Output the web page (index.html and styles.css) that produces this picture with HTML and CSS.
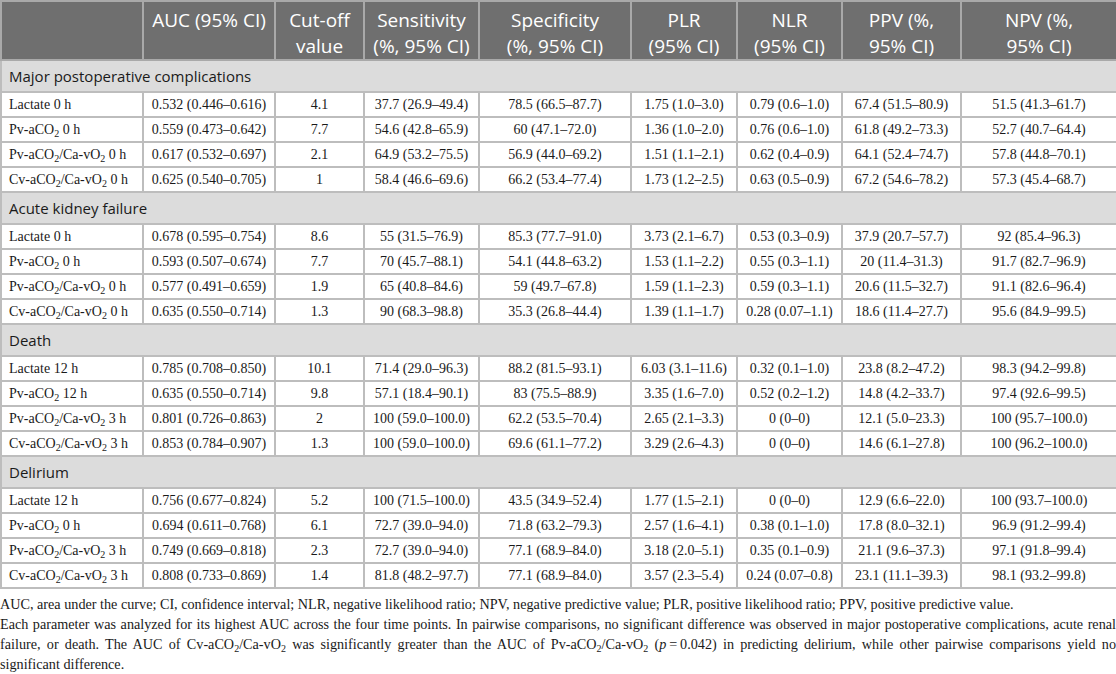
FILE: index.html
```html
<!DOCTYPE html>
<html lang="en">

<head>
    <meta charset="UTF-8">
    <meta name="viewport" content="width=device-width, initial-scale=1.0">
    <title>ROC table</title>
    <link rel="stylesheet" href="styles.css">
</head>

<body>

    <table class="roc">
        <colgroup>
            <col style="width:142px">
            <col style="width:132px">
            <col style="width:89px">
            <col style="width:115px">
            <col style="width:152px">
            <col style="width:106px">
            <col style="width:105px">
            <col style="width:119px">
            <col style="width:156px">
        </colgroup>
        <thead>
            <tr>
                <th></th>
                <th>AUC (95% CI)</th>
                <th>Cut-off<br>value</th>
                <th>Sensitivity<br>(%, 95% CI)</th>
                <th>Specificity<br>(%, 95% CI)</th>
                <th>PLR<br>(95% CI)</th>
                <th>NLR<br>(95% CI)</th>
                <th>PPV (%,<br>95% CI)</th>
                <th>NPV (%,<br>95% CI)</th>
            </tr>
        </thead>
        <tbody>
            <tr class="group"><td colspan="9">Major postoperative complications</td></tr>
            <tr>
                <td>Lactate 0 h</td><td>0.532 (0.446–0.616)</td><td>4.1</td><td>37.7 (26.9–49.4)</td><td>78.5 (66.5–87.7)</td>
                <td>1.75 (1.0–3.0)</td><td>0.79 (0.6–1.0)</td><td>67.4 (51.5–80.9)</td><td>51.5 (41.3–61.7)</td>
            </tr>
            <tr>
                <td>Pv-aCO<sub>2</sub> 0 h</td><td>0.559 (0.473–0.642)</td><td>7.7</td><td>54.6 (42.8–65.9)</td><td>60 (47.1–72.0)</td>
                <td>1.36 (1.0–2.0)</td><td>0.76 (0.6–1.0)</td><td>61.8 (49.2–73.3)</td><td>52.7 (40.7–64.4)</td>
            </tr>
            <tr>
                <td>Pv-aCO<sub>2</sub>/Ca-vO<sub>2</sub> 0 h</td><td>0.617 (0.532–0.697)</td><td>2.1</td><td>64.9 (53.2–75.5)</td><td>56.9 (44.0–69.2)</td>
                <td>1.51 (1.1–2.1)</td><td>0.62 (0.4–0.9)</td><td>64.1 (52.4–74.7)</td><td>57.8 (44.8–70.1)</td>
            </tr>
            <tr>
                <td>Cv-aCO<sub>2</sub>/Ca-vO<sub>2</sub> 0 h</td><td>0.625 (0.540–0.705)</td><td>1</td><td>58.4 (46.6–69.6)</td><td>66.2 (53.4–77.4)</td>
                <td>1.73 (1.2–2.5)</td><td>0.63 (0.5–0.9)</td><td>67.2 (54.6–78.2)</td><td>57.3 (45.4–68.7)</td>
            </tr>

            <tr class="group"><td colspan="9">Acute kidney failure</td></tr>
            <tr>
                <td>Lactate 0 h</td><td>0.678 (0.595–0.754)</td><td>8.6</td><td>55 (31.5–76.9)</td><td>85.3 (77.7–91.0)</td>
                <td>3.73 (2.1–6.7)</td><td>0.53 (0.3–0.9)</td><td>37.9 (20.7–57.7)</td><td>92 (85.4–96.3)</td>
            </tr>
            <tr>
                <td>Pv-aCO<sub>2</sub> 0 h</td><td>0.593 (0.507–0.674)</td><td>7.7</td><td>70 (45.7–88.1)</td><td>54.1 (44.8–63.2)</td>
                <td>1.53 (1.1–2.2)</td><td>0.55 (0.3–1.1)</td><td>20 (11.4–31.3)</td><td>91.7 (82.7–96.9)</td>
            </tr>
            <tr>
                <td>Pv-aCO<sub>2</sub>/Ca-vO<sub>2</sub> 0 h</td><td>0.577 (0.491–0.659)</td><td>1.9</td><td>65 (40.8–84.6)</td><td>59 (49.7–67.8)</td>
                <td>1.59 (1.1–2.3)</td><td>0.59 (0.3–1.1)</td><td>20.6 (11.5–32.7)</td><td>91.1 (82.6–96.4)</td>
            </tr>
            <tr>
                <td>Cv-aCO<sub>2</sub>/Ca-vO<sub>2</sub> 0 h</td><td>0.635 (0.550–0.714)</td><td>1.3</td><td>90 (68.3–98.8)</td><td>35.3 (26.8–44.4)</td>
                <td>1.39 (1.1–1.7)</td><td>0.28 (0.07–1.1)</td><td>18.6 (11.4–27.7)</td><td>95.6 (84.9–99.5)</td>
            </tr>

            <tr class="group"><td colspan="9">Death</td></tr>
            <tr>
                <td>Lactate 12 h</td><td>0.785 (0.708–0.850)</td><td>10.1</td><td>71.4 (29.0–96.3)</td><td>88.2 (81.5–93.1)</td>
                <td>6.03 (3.1–11.6)</td><td>0.32 (0.1–1.0)</td><td>23.8 (8.2–47.2)</td><td>98.3 (94.2–99.8)</td>
            </tr>
            <tr>
                <td>Pv-aCO<sub>2</sub> 12 h</td><td>0.635 (0.550–0.714)</td><td>9.8</td><td>57.1 (18.4–90.1)</td><td>83 (75.5–88.9)</td>
                <td>3.35 (1.6–7.0)</td><td>0.52 (0.2–1.2)</td><td>14.8 (4.2–33.7)</td><td>97.4 (92.6–99.5)</td>
            </tr>
            <tr>
                <td>Pv-aCO<sub>2</sub>/Ca-vO<sub>2</sub> 3 h</td><td>0.801 (0.726–0.863)</td><td>2</td><td>100 (59.0–100.0)</td><td>62.2 (53.5–70.4)</td>
                <td>2.65 (2.1–3.3)</td><td>0 (0–0)</td><td>12.1 (5.0–23.3)</td><td>100 (95.7–100.0)</td>
            </tr>
            <tr>
                <td>Cv-aCO<sub>2</sub>/Ca-vO<sub>2</sub> 3 h</td><td>0.853 (0.784–0.907)</td><td>1.3</td><td>100 (59.0–100.0)</td><td>69.6 (61.1–77.2)</td>
                <td>3.29 (2.6–4.3)</td><td>0 (0–0)</td><td>14.6 (6.1–27.8)</td><td>100 (96.2–100.0)</td>
            </tr>

            <tr class="group"><td colspan="9">Delirium</td></tr>
            <tr>
                <td>Lactate 12 h</td><td>0.756 (0.677–0.824)</td><td>5.2</td><td>100 (71.5–100.0)</td><td>43.5 (34.9–52.4)</td>
                <td>1.77 (1.5–2.1)</td><td>0 (0–0)</td><td>12.9 (6.6–22.0)</td><td>100 (93.7–100.0)</td>
            </tr>
            <tr>
                <td>Pv-aCO<sub>2</sub> 0 h</td><td>0.694 (0.611–0.768)</td><td>6.1</td><td>72.7 (39.0–94.0)</td><td>71.8 (63.2–79.3)</td>
                <td>2.57 (1.6–4.1)</td><td>0.38 (0.1–1.0)</td><td>17.8 (8.0–32.1)</td><td>96.9 (91.2–99.4)</td>
            </tr>
            <tr>
                <td>Pv-aCO<sub>2</sub>/Ca-vO<sub>2</sub> 3 h</td><td>0.749 (0.669–0.818)</td><td>2.3</td><td>72.7 (39.0–94.0)</td><td>77.1 (68.9–84.0)</td>
                <td>3.18 (2.0–5.1)</td><td>0.35 (0.1–0.9)</td><td>21.1 (9.6–37.3)</td><td>97.1 (91.8–99.4)</td>
            </tr>
            <tr>
                <td>Cv-aCO<sub>2</sub>/Ca-vO<sub>2</sub> 3 h</td><td>0.808 (0.733–0.869)</td><td>1.4</td><td>81.8 (48.2–97.7)</td><td>77.1 (68.9–84.0)</td>
                <td>3.57 (2.3–5.4)</td><td>0.24 (0.07–0.8)</td><td>23.1 (11.1–39.3)</td><td>98.1 (93.2–99.8)</td>
            </tr>
        </tbody>
    </table>

    <div class="notes">
        <p>AUC, area under the curve; CI, confidence interval; NLR, negative likelihood ratio; NPV, negative predictive value; PLR, positive likelihood ratio; PPV, positive predictive value.</p>
        <p>Each parameter was analyzed for its highest AUC across the four time points. In pairwise comparisons, no significant difference was observed in major postoperative complications, acute renal failure, or death. The AUC of Cv-aCO<sub>2</sub>/Ca-vO<sub>2</sub> was significantly greater than the AUC of Pv-aCO<sub>2</sub>/Ca-vO<sub>2</sub> (<i>p</i>&#8201;=&#8201;0.042) in predicting delirium, while other pairwise comparisons yield no <span class="keep">significant difference.</span></p>
    </div>

</body>

</html>
```

FILE: styles.css
```css
* {
    margin: 0px;
    padding: 0px;
}

body {
    background-color: #fff;
    color: #1a1a1a;
    font-family: "Liberation Serif", "Times New Roman", serif;
    font-size: 14px;
}

.roc {
    width: 1116px;
    table-layout: fixed;
    border-collapse: collapse;
}

.roc th,
.roc td {
    border: 2px solid #bdbdbd;
}

/* 表头：深灰底白字，文字靠上 */
.roc thead th {
    height: 52px;
    padding: 5px 4px 0;
    background-color: #6f6f6f;
    border-color: #a9a9a9;
    color: #fff;
    font-family: "Open Sans", "Noto Sans", sans-serif;
    font-size: 19px;
    font-weight: 400;
    line-height: 26px;
    vertical-align: top;
    text-align: center;
    white-space: nowrap;
}

.roc tbody td {
    height: 23px;
    padding: 0 4px;
    text-align: center;
    line-height: 18px;
    white-space: nowrap;
}

.roc tbody td:first-child {
    text-align: left;
    padding-left: 7px;
}

.roc tbody tr.group td {
    height: 30px;
    padding-left: 7px;
    background-color: #dcdcdc;
    font-family: "Open Sans", "Noto Sans", sans-serif;
    font-size: 15px;
    text-align: left;
}

.roc sub,
.notes sub {
    font-size: 10px;
    line-height: 0;
    vertical-align: -3px;
}

.notes {
    padding-top: 5px;
    font-size: 14.2px;
    line-height: 20px;
}

.notes p {
    text-align: justify;
}

/* 让最后两个词一起换行，和原图一致 */
.notes .keep {
    white-space: nowrap;
}
```
